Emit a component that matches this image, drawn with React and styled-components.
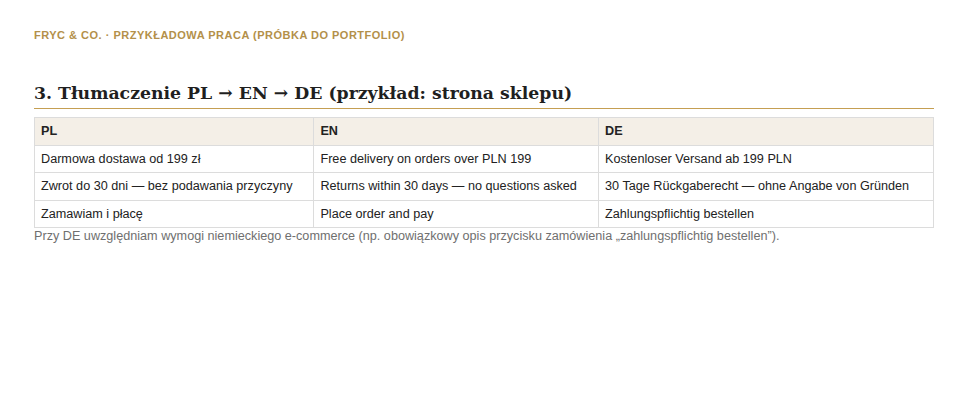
import React from 'react';
import styled, { createGlobalStyle } from 'styled-components';

const GlobalStyle = createGlobalStyle`
  body {
    margin: 0;
    background: #fff;
    font-family: "Liberation Sans", Arial, sans-serif;
  }
`;

const rows = [
  ['Darmowa dostawa od 199 zł', 'Free delivery on orders over PLN 199', 'Kostenloser Versand ab 199 PLN'],
  ['Zwrot do 30 dni — bez podawania przyczyny', 'Returns within 30 days — no questions asked', '30 Tage Rückgaberecht — ohne Angabe von Gründen'],
  ['Zamawiam i płacę', 'Place order and pay', 'Zahlungspflichtig bestellen'],
];

const App = () => (
  <Page>
    <GlobalStyle />
    <Eyebrow>Fryc &amp; Co. · Przykładowa praca (próbka do portfolio)</Eyebrow>
    <Section>
      <Heading>3. Tłumaczenie PL → EN → DE (przykład: strona sklepu)</Heading>
      <Table>
        <thead>
          <tr>
            <Th>PL</Th>
            <Th>EN</Th>
            <Th>DE</Th>
          </tr>
        </thead>
        <tbody>
          {rows.map((r, i) => (
            <tr key={i}>
              {r.map((c, j) => (
                <Td key={j}>{c}</Td>
              ))}
            </tr>
          ))}
        </tbody>
      </Table>
      <Note>
        Przy DE uwzględniam wymogi niemieckiego e-commerce (np. obowiązkowy opis przycisku zamówienia „zahlungspflichtig bestellen”).
      </Note>
    </Section>
  </Page>
);

const Page = styled.div`
  width: 900px;
  margin: 0 0 0 34px;
  padding-top: 29px;
  box-sizing: border-box;
`;

const Eyebrow = styled.div`
  font-size: 11px;
  font-weight: bold;
  letter-spacing: 0.5px;
  text-transform: uppercase;
  color: #b3904a;
  line-height: 13px;
`;

const Section = styled.section`
  margin-top: 40px;
`;

const Heading = styled.h2`
  margin: 0 0 8px;
  font-family: "DejaVu Serif", Georgia, serif;
  font-size: 17.3px;
  font-weight: bold;
  color: #1f1f1f;
  line-height: 22px;
  padding-bottom: 4px;
  border-bottom: 1px solid #c59f52;
`;

const Table = styled.table`
  width: 100%;
  border-collapse: collapse;
  font-size: 12.65px;
  line-height: 14.5px;
  color: #222;
`;

const Th = styled.th`
  text-align: left;
  font-weight: bold;
  background: #f4efe7;
  border: 1px solid #dcdcdc;
  padding: 6px 6px;
`;

const Td = styled.td`
  border: 1px solid #dcdcdc;
  padding: 6px 6px;
`;

const Note = styled.p`
  margin: 0;
  font-size: 12.65px;
  color: #6f6f6f;
  line-height: 17px;
`;

export default App;
